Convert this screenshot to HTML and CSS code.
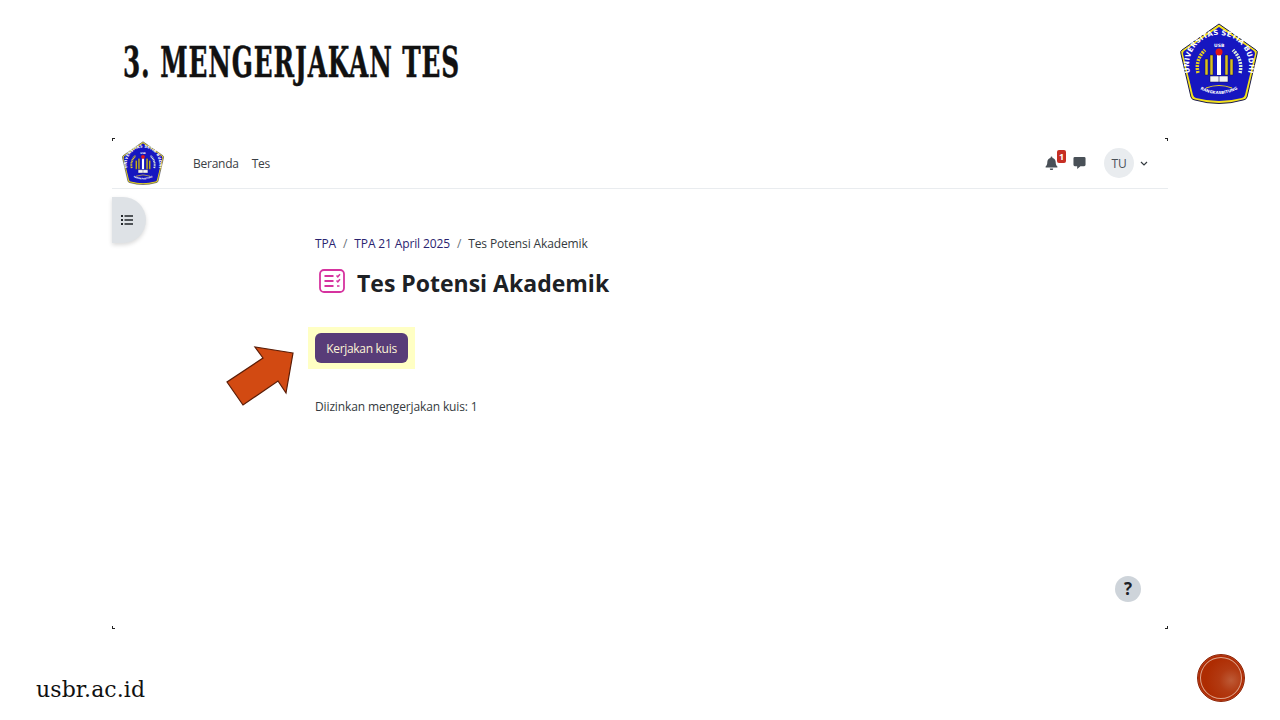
FILE: index.html
```html
<!DOCTYPE html>
<html lang="id">
<head>
<meta charset="utf-8">
<title>Mengerjakan Tes</title>
<link rel="stylesheet" href="styles.css">
</head>
<body>
<svg class="defs" width="0" height="0" aria-hidden="true">
  <defs>
    <symbol id="usb-logo" viewBox="0 0 78 81">
      <path d="M39 1 L76 27 Q78 28 77 31 L67 74 Q66 77 63 77 Q39 84 15 77 Q12 77 11 74 L1 31 Q0 28 2 27 Z" fill="#f4e21c" stroke="#1a1a50" stroke-width="1"/>
      <path d="M39 4 L74 28 Q75 29 75 31 L65 72 Q64 75 62 75 Q39 81 16 75 Q14 75 13 72 L3 31 Q3 29 4 28 Z" fill="#1616c0"/>
      <path id="usb-arc" d="M12.500 56 A30 30 0 1 1 65.500 56" fill="none"/>
      <path id="usb-arc-b" d="M15 63 Q39 79 63 63" fill="none"/>
      <text class="logo-arc"><textPath href="#usb-arc" startOffset="50%" text-anchor="middle">UNIVERSITAS SETIA BUDHI</textPath></text>
      <text class="logo-arc-small"><textPath href="#usb-arc-b" startOffset="50%" text-anchor="middle">RANGKASBITUNG</textPath></text>
      <text class="logo-usb" x="34" y="24">USB</text>
      <path d="M18 50 Q15 37 25 27" fill="none" stroke="#e8d020" stroke-width="3.500" stroke-dasharray="2 1"/>
      <path d="M60 50 Q63 37 53 27" fill="none" stroke="#dff0d8" stroke-width="3.500" stroke-dasharray="2 1"/>
      <path d="M25 36h3v16h-3zM30 32h3v20h-3zM45 32h3v20h-3zM50 36h3v16h-3z" fill="#d8c020" stroke="#101050" stroke-width=".5"/>
      <path d="M37 32h4v20h-4z" fill="#fff"/>
      <circle cx="39" cy="29" r="3.500" fill="#e01818"/>
      <path d="M30 53h18v6H30z" fill="#f4f4f4" stroke="#101050" stroke-width=".5"/>
      <path d="M39 53v6" stroke="#101050" stroke-width=".6"/>
      <path d="M26 65q13-5 26 0" fill="none" stroke="#e8d020" stroke-width="1.200"/>
    </symbol>
  </defs>
</svg>

<main class="slide">
  <header class="slide-head">
    <h1 class="slide-title">3. MENGERJAKAN TES</h1>
    <svg class="head-logo"><use href="#usb-logo"/></svg>
  </header>

  <section class="shot">
    <i class="crop crop-tl"></i><i class="crop crop-tr"></i><i class="crop crop-bl"></i><i class="crop crop-br"></i>

    <nav class="navbar">
      <svg class="nav-logo"><use href="#usb-logo"/></svg>
      <a class="nav-link">Beranda</a>
      <a class="nav-link">Tes</a>
      <div class="nav-right">
        <span class="bell">
          <svg class="nav-icon" viewBox="0 0 14 15"><path d="M7 .5a1 1 0 0 1 1 1v.6c2.300.5 3.500 2.300 3.500 4.400 0 2.500.7 3.700 1.800 4.900.3.400 0 1-.5 1H1.200c-.5 0-.8-.6-.5-1C1.800 10.200 2.500 9 2.500 6.500c0-2.100 1.200-3.900 3.500-4.400v-.6a1 1 0 0 1 1-1zM5.200 13.500h3.600a1.800 1.800 0 0 1-3.600 0z" fill="#495057"/></svg>
          <b class="badge">1</b>
        </span>
        <svg class="nav-icon chat" viewBox="0 0 14 15"><path d="M2 1h10a1.500 1.500 0 0 1 1.500 1.500v7A1.500 1.500 0 0 1 12 11H8l-3.500 3v-3H2A1.500 1.500 0 0 1 .5 9.500v-7A1.500 1.500 0 0 1 2 1z" fill="#495057"/></svg>
        <span class="avatar">TU</span>
        <svg class="caret" viewBox="0 0 8 5"><path d="M1 1l3 3 3-3" fill="none" stroke="#343a40" stroke-width="1.200"/></svg>
      </div>
    </nav>

    <button class="drawer" type="button" aria-label="Indeks">
      <svg viewBox="0 0 12 10" width="12" height="10"><path d="M0 0h2v2H0zM0 4h2v2H0zM0 8h2v2H0zM3.500.2H12v1.600H3.500zM3.500 4.200H12v1.600H3.500zM3.500 8.200H12v1.600H3.500z" fill="#212529"/></svg>
    </button>

    <div class="content">
      <ol class="crumbs">
        <li><a>TPA</a></li>
        <li class="sep">/</li>
        <li><a>TPA 21 April 2025</a></li>
        <li class="sep">/</li>
        <li>Tes Potensi Akademik</li>
      </ol>
      <div class="page-head">
        <svg class="quiz-icon" viewBox="0 0 26 24"><rect x="1" y="1" width="24" height="22" rx="4" fill="none" stroke="#d6339f" stroke-width="1.800"/><path d="M5.500 7h9M5.500 12h9M5.500 17h9" stroke="#d6339f" stroke-width="1.800" fill="none"/><path d="M17.500 6.500l1.300 1.300 2.200-2.600M17.500 11.500l1.300 1.300 2.200-2.600M18 17h2.500" stroke="#d6339f" stroke-width="1.500" fill="none"/></svg>
        <h2 class="page-title">Tes Potensi Akademik</h2>
      </div>
      <div class="highlight"><button class="btn" type="button">Kerjakan kuis</button></div>
      <p class="note">Diizinkan mengerjakan kuis: 1</p>
    </div>

    <svg class="arrow" viewBox="0 0 70 62"><path d="M67 9 L29 3 L37 14 L1 38 L17 61 L52 37 L60 49 Z" fill="#d24a12" stroke="#5a1c06" stroke-width="1.200"/></svg>
    <span class="help">?</span>
  </section>

  <footer class="slide-foot">
    <span class="site">usbr.ac.id</span>
    <span class="seal"></span>
  </footer>
</main>
</body>
</html>
```
FILE: styles.css
```css
* { box-sizing: border-box; }
html, body { margin: 0; padding: 0; background: #fff; }
.defs { position: absolute; }
.slide {
  width: 1280px;
  height: 720px;
  overflow: hidden;
  background: #fff;
  display: flex;
  flex-direction: column;
}
.slide-head {
  height: 138px;
  display: flex;
  justify-content: space-between;
  align-items: flex-start;
  padding: 23px 22px 0 123px;
}
.slide-title {
  margin: 14px 0 0;
  font: 700 43px/50px "DejaVu Serif Condensed", "DejaVu Serif", serif;
  color: #111;
  letter-spacing: 1.400px;
  -webkit-text-stroke: .5px #111;
  transform: scaleX(.64);
  transform-origin: left center;
  white-space: nowrap;
  width: 0;
}
.head-logo { width: 78px; height: 81px; }
.shot {
  position: relative;
  width: 1056px;
  height: 491px;
  margin-left: 112px;
  font-family: "Open Sans", "Noto Sans", sans-serif;
  font-size: 12px;
  letter-spacing: -.13px;
  color: #343a40;
}
.crop { position: absolute; width: 3px; height: 3px; border: 0 solid #222; }
.crop-tl { left: 0; top: 0; border-width: 1px 0 0 1px; }
.crop-tr { right: 0; top: 0; border-width: 1px 1px 0 0; }
.crop-bl { left: 0; bottom: 0; border-width: 0 0 1px 1px; }
.crop-br { right: 0; bottom: 0; border-width: 0 1px 1px 0; }
.navbar {
  height: 51px;
  display: flex;
  align-items: center;
  border-bottom: 1px solid #e9ecef;
  padding: 0 20px 0 10px;
}
.nav-logo { width: 42px; height: 44px; margin-right: 29px; }
.nav-link { margin-right: 13px; color: #3b4045; letter-spacing: -.25px; }
.nav-right { margin-left: auto; display: flex; align-items: center; }
.bell { position: relative; display: flex; }
.nav-icon { width: 13px; height: 14px; }
.badge {
  position: absolute;
  left: 12px;
  top: -6px;
  width: 9px;
  height: 13px;
  border-radius: 2px;
  background: #c62f24;
  color: #fff;
  font-size: 9px;
  line-height: 13px;
  font-weight: 700;
  text-align: center;
}
.chat { margin-left: 15px; margin-right: 18px; }
.avatar {
  width: 30px;
  height: 30px;
  border-radius: 50%;
  background: #e9ecef;
  color: #495057;
  text-align: center;
  line-height: 32px;
}
.caret { width: 8px; height: 5px; margin-left: 6px; }
.drawer {
  display: flex;
  align-items: center;
  width: 34px;
  height: 46px;
  margin-top: 8px;
  padding: 0 0 0 9px;
  border: 0;
  background: #dee2e6;
  border-radius: 0 23px 23px 0;
  box-shadow: 0 2px 4px rgba(0,0,0,.15);
}
.content {
  position: absolute;
  left: 203px;
  top: 97px;
  width: 500px;
}
.crumbs {
  list-style: none;
  display: flex;
  gap: 7px;
  margin: 0;
  padding: 0;
  line-height: 18px;
}
.crumbs a { color: #2a2470; }
.sep { color: #6a7178; }
.page-head {
  display: flex;
  align-items: center;
  margin-top: 12px;
  padding-left: 4px;
  height: 36px;
}
.quiz-icon { width: 26px; height: 24px; margin-right: 12px; margin-top: -4px; }
.page-title {
  margin: 0;
  font-size: 23px;
  line-height: 30px;
  font-weight: 700;
  letter-spacing: 0;
  color: #1d2125;
}
.highlight {
  width: 107px;
  height: 42px;
  margin: 26px 0 0 -7px;
  padding: 6px 7px;
  background: #ffffc4;
}
.btn {
  display: block;
  width: 93px;
  height: 30px;
  padding: 0;
  border: 0;
  border-radius: 6px;
  background: #583c78;
  color: #fdf5d6;
  font: 12px "Open Sans", "Noto Sans", sans-serif;
  letter-spacing: -.3px;
}
.note { margin: 29px 0 0; line-height: 18px; }
.arrow {
  position: absolute;
  left: 114px;
  top: 206px;
  width: 70px;
  height: 62px;
}
.help {
  position: absolute;
  left: 1003px;
  top: 438px;
  width: 26px;
  height: 26px;
  border-radius: 50%;
  background: #ced4da;
  color: #1d2125;
  text-align: center;
  font-size: 17px;
  line-height: 26px;
  font-weight: 700;
}
.slide-foot {
  flex: 1;
  display: flex;
  justify-content: space-between;
  align-items: flex-start;
  padding: 25px 35px 0 36px;
}
.site {
  margin-top: 23px;
  font: 400 22px/26px "DejaVu Serif", serif;
  color: #111;
  letter-spacing: .1px;
}
.seal {
  width: 48px;
  height: 48px;
  border-radius: 50%;
  background: radial-gradient(circle at 72% 55%, #bd5a36 0, #b23a12 28%, #ae2c02 60%);
  border: 1px solid #8e2406;
  box-shadow: inset 0 0 0 2px #b02c04, inset 0 0 0 3px #dca48c;
}
.logo-arc { font: 700 7px "DejaVu Sans", sans-serif; fill: #fff; letter-spacing: .2px; }
.logo-arc-small { font: 700 4px "DejaVu Sans", sans-serif; fill: #fff; }
.logo-usb { font: 700 4.500px "DejaVu Sans", sans-serif; fill: #fff; }
```
